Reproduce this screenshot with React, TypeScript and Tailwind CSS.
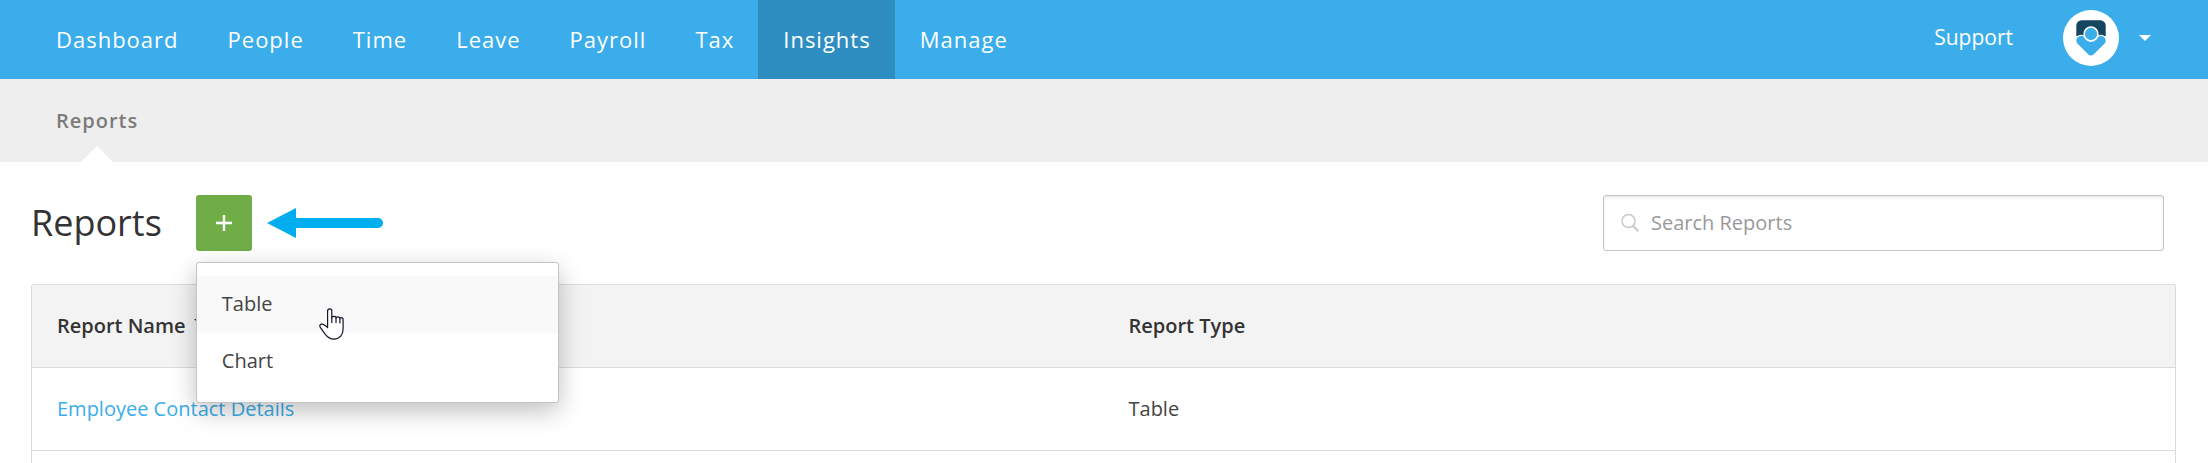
const navItems = ["Dashboard", "People", "Time", "Leave", "Payroll", "Tax", "Insights", "Manage"];

const reports = [{ name: "Employee Contact Details", type: "Table" }];

function Avatar() {
  return (
    <svg viewBox="0 0 56 56" className="size-14" aria-hidden="true">
      <circle cx="28" cy="28" r="28" fill="#fff" />
      <path d="M13.300 26V15.500a5.300 5.300 0 0 1 5.300-5.300h18.800a5.300 5.300 0 0 1 5.300 5.300V26Z" fill="#15455f" />
      <path
        d="M28 31.500c-2.800 0-5-1.500-6.200-3.600-1.700-2.300-4.900-2.600-7-.7-2.100 2-2 4.600-.2 6.500l10.900 10.800c1.400 1.400 3.600 1.400 5 0l10.900-10.800c1.800-1.900 1.900-4.500-.2-6.500-2.100-1.900-5.300-1.600-7 .7-1.200 2.100-3.400 3.600-6.200 3.600Z"
        fill="#3aadea"
        stroke="#fff"
        strokeWidth="2.400"
        paintOrder="stroke"
      />
      <circle cx="28" cy="24" r="6.900" fill="#3aadea" stroke="#fff" strokeWidth="1.500" />
    </svg>
  );
}

function Header() {
  return (
    <header className="flex h-[79px] items-stretch justify-between bg-[#3aadea] pr-[57px] pl-[31px] text-white">
      <nav className="flex" aria-label="Main">
        {navItems.map((item) => (
          <a
            key={item}
            href="#"
            className={
              item === "Insights"
                ? "flex items-center bg-[#2e8ec2] pr-6 pb-px pl-[25px] text-[22px] tracking-[1px]"
                : "flex items-center pr-6 pb-px pl-[25px] text-[22px] tracking-[1px]"
            }
          >
            {item}
          </a>
        ))}
      </nav>
      <div className="flex items-center pb-[3px]">
        <a href="#" className="mr-[50px] text-[21px]">
          Support
        </a>
        <button type="button" aria-label="Account" className="flex items-center gap-5">
          <Avatar />
          <svg viewBox="0 0 12 6" className="h-[6px] w-3" aria-hidden="true">
            <path d="M0 0h12L6 6Z" fill="#fff" />
          </svg>
        </button>
      </div>
    </header>
  );
}

function SubNav() {
  return (
    <nav className="flex h-[83px] bg-[#eeeeee] pl-14" aria-label="Insights">
      <a href="#" className="relative flex items-center text-[20px] font-semibold tracking-[1px] text-[#7b7b7b]">
        Reports
        <svg viewBox="0 0 32 16" className="absolute bottom-0 left-1/2 h-4 w-8 -translate-x-1/2" aria-hidden="true">
          <path d="M0 16 16 0l16 16Z" fill="#fff" />
        </svg>
      </a>
    </nav>
  );
}

function HandCursor() {
  return (
    <svg viewBox="0 0 25 32" className="absolute top-[45px] left-[122px] h-8 w-[25px]" aria-hidden="true">
      <path
        d="M8.600 19.500V3a2.100 2.100 0 0 1 4.200 0v7c0-1.200 1.100-1.700 2.100-1.700 1.300 0 2.200.7 2.200 1.800 0-.8.900-1.300 1.800-1.300 1.200 0 2 .8 2 1.900 0-.6.700-1 1.300-1 1.200 0 1.900.9 1.900 2.100v9c0 6-3.400 10.300-9 10.300-4 0-6.700-2-9-5L1.300 19.300C-.1 17.300 1.600 15.700 3.500 16.200c2 .5 3.600 1.800 5.100 3.300Z"
        fill="#fff"
        stroke="#15152a"
        strokeWidth="1.200"
        strokeLinejoin="round"
      />
      <path d="M12.800 10v4.500M17 10.200v4.300M20.900 11v4" stroke="#15152a" strokeWidth="1.200" fill="none" strokeLinecap="round" />
    </svg>
  );
}

function AddMenu() {
  return (
    <div className="relative">
      <button
        type="button"
        aria-label="Add report"
        className="flex size-14 items-center justify-center rounded-[3px] bg-[#70ad47]"
      >
        <svg viewBox="0 0 16 16" className="size-4" aria-hidden="true">
          <path d="M8 0v16M0 8h16" stroke="#fff" strokeWidth="2.400" />
        </svg>
      </button>
      <div className="absolute top-[67px] left-0 z-10 w-[363px] rounded-[3px] border border-[#c4c4c4] bg-white pt-[13px] pb-3 text-[20px] text-[#444] shadow-[0_8px_24px_rgba(0,0,0,0.25)]">
        <button type="button" className="flex h-[57px] w-full items-center bg-[#f9f9f9] px-[25px] pb-0.5">
          Table
        </button>
        <button type="button" className="flex h-[57px] w-full items-center px-[25px] pb-0.5">
          Chart
        </button>
        <HandCursor />
      </div>
    </div>
  );
}

function Toolbar() {
  return (
    <div className="flex items-center pr-3">
      <h1 className="mr-[34px] text-[36px] leading-[56px] text-[#333]">Reports</h1>
      <AddMenu />
      <svg viewBox="0 0 116 30" className="ml-[15px] h-[30px] w-[116px]" aria-hidden="true">
        <path d="M0 15 29 0v10h82a5 5 0 0 1 0 10H29v10Z" fill="#00aeef" />
      </svg>
      <label className="ml-auto flex h-14 w-[561px] items-center gap-[11px] rounded-[3px] border border-[#c4c4c4] px-4 shadow-[inset_0_2px_3px_rgba(0,0,0,0.08)]">
        <svg viewBox="0 0 20 20" className="size-5" aria-hidden="true">
          <circle cx="8.500" cy="8" r="6.500" fill="none" stroke="#cacaca" strokeWidth="1.500" />
          <path d="m13 12.800 5.300 5.500" stroke="#cacaca" strokeWidth="2.200" />
        </svg>
        <input
          type="text"
          aria-label="Search Reports"
          placeholder="Search Reports"
          className="min-w-0 flex-1 bg-transparent text-[20px] text-[#333] outline-none placeholder:text-[#999]"
        />
      </label>
    </div>
  );
}

function ReportTable() {
  return (
    <div className="mt-[33px] overflow-hidden rounded-t-[3px] border border-b-0 border-[#dadada]">
      <table className="w-full table-fixed border-collapse text-left text-[20px] text-[#444]">
        <thead>
          <tr className="h-[82px] border-b border-[#dadada] bg-[#f3f3f3] text-[#333]">
            <th className="px-[25px] font-semibold">
              <span className="flex items-center gap-2">
                Report Name
                <svg viewBox="0 0 10 5" className="mb-2 h-[5px] w-[10px]" aria-hidden="true">
                  <path d="M0 0h10L5 5Z" fill="#333" />
                </svg>
              </span>
            </th>
            <th className="px-[25px] font-semibold">Report Type</th>
          </tr>
        </thead>
        <tbody>
          {reports.map((report) => (
            <tr key={report.name} className="h-[83px] border-b border-[#dadada]">
              <td className="px-[25px]">
                <a href="#" className="text-[#3aadea]">
                  {report.name}
                </a>
              </td>
              <td className="px-[25px]">{report.type}</td>
            </tr>
          ))}
          <tr className="h-[83px]">
            <td />
            <td />
          </tr>
        </tbody>
      </table>
    </div>
  );
}

export default function App() {
  return (
    <div className="h-screen overflow-hidden bg-white font-['Open_Sans',sans-serif]">
      <Header />
      <SubNav />
      <main className="pt-[33px] pr-8 pl-[31px]">
        <Toolbar />
        <ReportTable />
      </main>
    </div>
  );
}
